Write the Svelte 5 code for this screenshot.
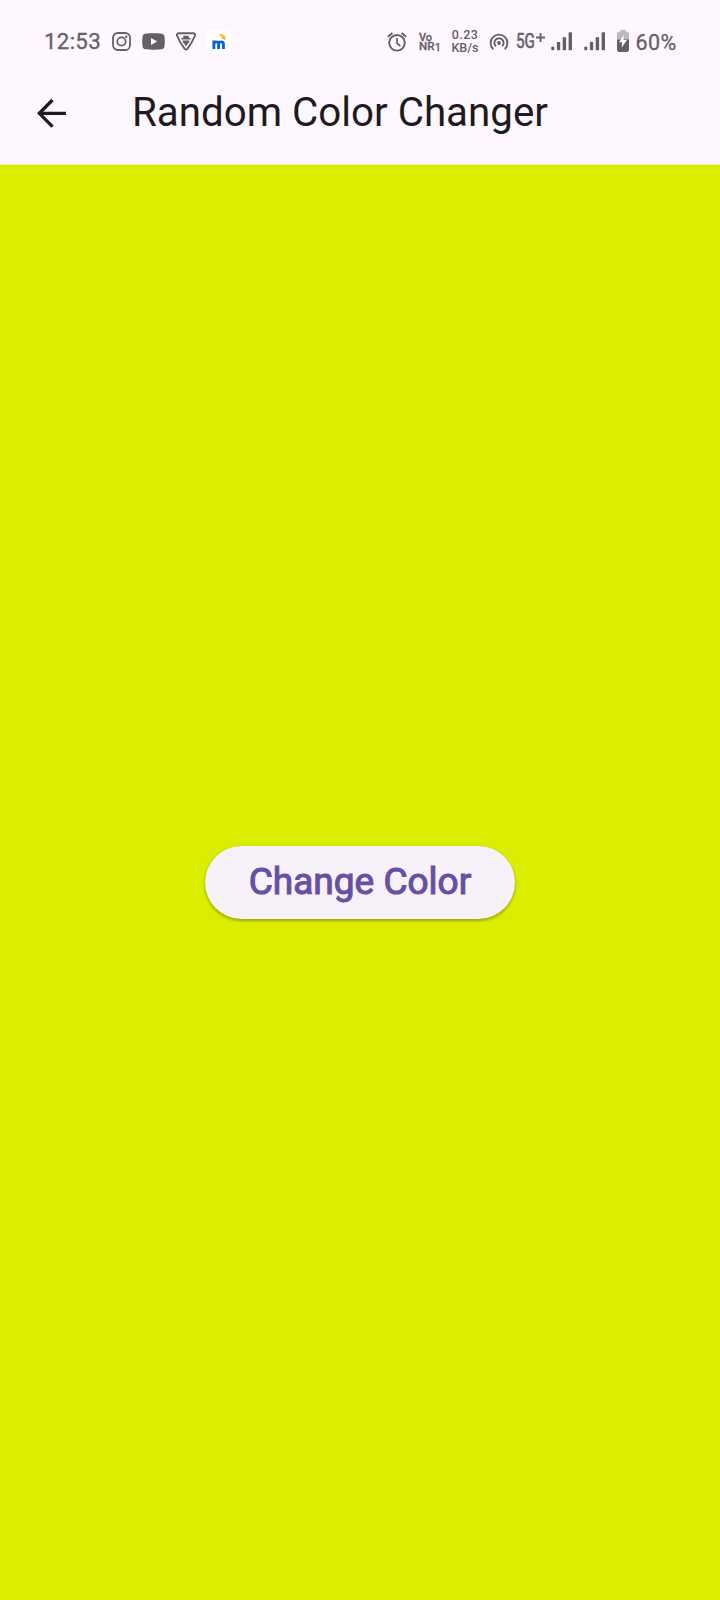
<script>
  let background = $state('#dcee00');

  function changeColor() {
    const value = Math.floor(Math.random() * 0x1000000);
    background = '#' + value.toString(16).padStart(6, '0');
  }
</script>

{#snippet signal()}
  <svg class="signal" width="21" height="19" viewBox="0 0 21 19" fill="currentColor">
    <rect x="0.3" y="14.7" width="3" height="3.5" />
    <rect x="5.9" y="10" width="3.3" height="8.2" />
    <rect x="11.7" y="5.2" width="3.4" height="13" />
    <rect x="17.6" y="0.3" width="3.4" height="17.9" />
  </svg>
{/snippet}

<div class="screen">
  <div class="status">
    <div class="left">
      <span class="time">12:53</span>
      <svg class="insta" width="19" height="19" viewBox="0 0 19 19" fill="none" stroke="currentColor">
        <rect x="1" y="1" width="17" height="17" rx="4.8" stroke-width="1.8" />
        <circle cx="9.5" cy="9.5" r="4.2" stroke-width="1.8" />
        <circle cx="14.2" cy="4.8" r="1.2" fill="currentColor" stroke="none" />
      </svg>
      <svg class="tube" width="23" height="17" viewBox="0 0 23 17">
        <path fill="currentColor" d="M3.5.8C8 .2 15 .2 19.5.8c2 .3 2.8 1.2 3 3 .4 3 .4 6.4 0 9.4-.2 1.800-1 2.700-3 3-4.500.6-11.500.6-16 0-2-.3-2.800-1.200-3-3-.4-3-.4-6.400 0-9.400.2-1.800 1-2.700 3-3Z" />
        <path fill="#fef7ff" d="M9 5v7l6.200-3.500Z" />
      </svg>
      <svg class="shield" width="20" height="19" viewBox="0 0 20 19" fill="none" stroke="currentColor">
        <path stroke-width="1.9" stroke-linejoin="round" d="M3 1.2h14c1.700 0 2.500 1.300 1.800 2.800-1.800 4.500-4.300 8.900-7.500 12.900-.8 1-1.800 1-2.600 0C5.500 12.900 3 8.500 1.200 4 .5 2.500 1.300 1.200 3 1.200Z" />
        <path fill="currentColor" stroke="none" d="M7.500 3.800h5l.5 2.200h1.700v1.400H5.300V6H7Z" />
        <path fill="currentColor" stroke="none" d="M6.500 8.400h7c-.1 1.500-.6 2.300-1.600 3.100L10 14.600l-1.900-3.100c-1-.8-1.500-1.600-1.600-3.100Z" />
      </svg>
      <svg class="mapp" width="24" height="24" viewBox="0 0 24 24">
        <rect width="24" height="24" rx="4" fill="#fff" />
        <path fill="none" stroke="#0b63ce" stroke-width="2.900" d="M6.900 19v-8.500M6.900 13.700c0-2.500 4.700-2.500 4.700 0V19M11.600 13.700c0-2.500 4.800-2.500 4.800 0V19" />
        <path fill="#fdb813" d="M11.600 4.600c2-.9 4.500-.2 5.700 1.400l1.200-.3-.2 4.400-4.200-1.500 1-.9c-.8-1.300-1.900-2.200-3.500-3.100Z" />
      </svg>
    </div>

    <div class="right">
      <svg class="alarm" width="20" height="20" viewBox="0 0 20 20" fill="none" stroke="currentColor">
        <circle cx="10" cy="10.800" r="7.800" stroke-width="1.900" />
        <path stroke-width="1.700" d="M10 6v5.200l3.300 2.800" />
        <path stroke-width="1.900" d="M.8 4.700 5.400.9M19.200 4.700 14.600.9" />
      </svg>
      <div class="volte">
        <span>Vo</span>
        <span class="nr">NR<small>1</small></span>
      </div>
      <div class="speed"><span>0.23</span><span>KB/s</span></div>
      <svg class="hotspot" width="20" height="18" viewBox="0 0 20 18" fill="none" stroke="currentColor" stroke-width="1.900">
        <path d="M4.300 16.200a8.400 8.400 0 1 1 11.400 0" />
        <path d="M6.900 13.300a4.600 4.600 0 1 1 6.200 0" />
        <circle cx="10" cy="10" r="1.900" fill="currentColor" stroke="none" />
      </svg>
      <div class="network"><span>5G</span>
        <svg width="9" height="9" viewBox="0 0 9 9" stroke="currentColor" stroke-width="1.900"><path d="M4.500 0v9M0 4.500h9" /></svg>
      </div>
      {@render signal()}
      <div class="second">{@render signal()}</div>
      <svg class="battery" width="12" height="23" viewBox="0 0 12 23">
        <path fill="#bdb8bf" d="M3.400 0h5.200v1.500h.8c1.600 0 2.600 1 2.600 2.600V10H0V4.100c0-1.600 1-2.600 2.600-2.600h.8Z" />
        <path fill="#656066" d="M0 9.500h12v10.300c0 1.300-.9 2.100-2.200 2.100H2.200C.9 21.900 0 21.100 0 19.800Z" />
        <path fill="#fff" d="M6.800 5 2.100 12.300h3l-.4 5.300 5.200-7.600H6.500Z" />
      </svg>
      <span class="percent">60%</span>
    </div>
  </div>

  <header>
    <svg class="back" width="30" height="30" viewBox="0 0 30 30" fill="none" stroke="currentColor" stroke-width="3.300">
      <path d="M29 15.300H3M15.500 2 2.300 15.300l13.200 13.300" />
    </svg>
    <h1>Random Color Changer</h1>
  </header>

  <main style:background>
    <button onclick={changeColor}>Change Color</button>
  </main>
</div>

<style>
  :global(body) {
    margin: 0;
  }
  .screen {
    width: 720px;
    height: 1600px;
    display: flex;
    flex-direction: column;
    overflow: hidden;
    background: #fef7ff;
    font-family: Roboto, sans-serif;
  }
  svg {
    display: block;
    flex: none;
  }
  .status {
    height: 83px;
    flex: none;
    display: flex;
    justify-content: space-between;
    color: #656066;
  }
  .left,
  .right {
    display: flex;
    height: 83px;
    align-items: center;
    white-space: nowrap;
  }
  .left {
    padding-left: 44px;
  }
  .right {
    width: 333px;
  }
  .time {
    width: 67.500px;
    padding-bottom: 2px;
    font-size: 22.300px;
    letter-spacing: 0.3px;
    line-height: 26px;
    -webkit-text-stroke: 0.3px;
  }
  .tube {
    margin-left: 11px;
  }
  .shield {
    margin-left: 11px;
  }
  .mapp {
    margin-left: 11.500px;
  }
  .volte {
    width: 22px;
    margin-left: 12px;
    display: flex;
    flex-direction: column;
    font-size: 11px;
    font-weight: 500;
    line-height: 9px;
    -webkit-text-stroke: 0.3px;
  }
  .nr {
    font-size: 11.500px;
    line-height: 8px;
  }
  .nr small {
    position: relative;
    top: 1px;
    margin-left: 0.5px;
    font-size: 10px;
  }
  .speed {
    width: 28px;
    margin-left: 10px;
    display: flex;
    flex-direction: column;
    align-items: center;
    font-size: 12.500px;
    font-weight: 500;
    line-height: 13px;
    padding-bottom: 1px;
  }
  .speed span:first-child {
    letter-spacing: 0.4px;
  }
  .hotspot {
    margin-left: 10px;
  }
  .network {
    width: 29px;
    margin-left: 6.500px;
    display: flex;
    justify-content: space-between;
    font-size: 19.500px;
    line-height: 22px;
  }
  .network span {
    width: 20px;
    transform: scaleX(0.78);
    transform-origin: left;
    -webkit-text-stroke: 0.6px;
  }
  .network svg {
    margin-top: 2px;
  }
  .signal {
    margin-left: 6px;
  }
  .second {
    margin-left: 6px;
  }
  .battery {
    margin-left: 12px;
  }
  .percent {
    margin-left: 7px;
    font-size: 21.500px;
    letter-spacing: 0.4px;
    line-height: 26px;
    padding-top: 2px;
    -webkit-text-stroke: 0.3px;
  }
  header {
    height: 81px;
    flex: none;
    display: flex;
    align-items: flex-start;
    color: #1d1b20;
  }
  .back {
    margin: 15px 0 0 37px;
  }
  h1 {
    margin: 6px 0 0 65px;
    font-size: 40.300px;
    line-height: 48px;
    font-weight: 400;
    white-space: nowrap;
  }
  main {
    flex: 1;
    display: flex;
    align-items: center;
    justify-content: center;
    border-top: 1px solid rgb(254 247 255 / 0.6);
  }
  button {
    width: 310px;
    height: 73px;
    padding: 0 0 1px;
    border: 0;
    border-radius: 37px;
    background: #f7f2fa;
    color: #6750a4;
    font: 400 37px/44px Roboto, sans-serif;
    -webkit-text-stroke: 1.100px #6750a4;
    white-space: nowrap;
    box-shadow: 0 2px 3px rgb(0 0 0 / 0.22), 0 1px 4px rgb(0 0 0 / 0.12);
  }
</style>
